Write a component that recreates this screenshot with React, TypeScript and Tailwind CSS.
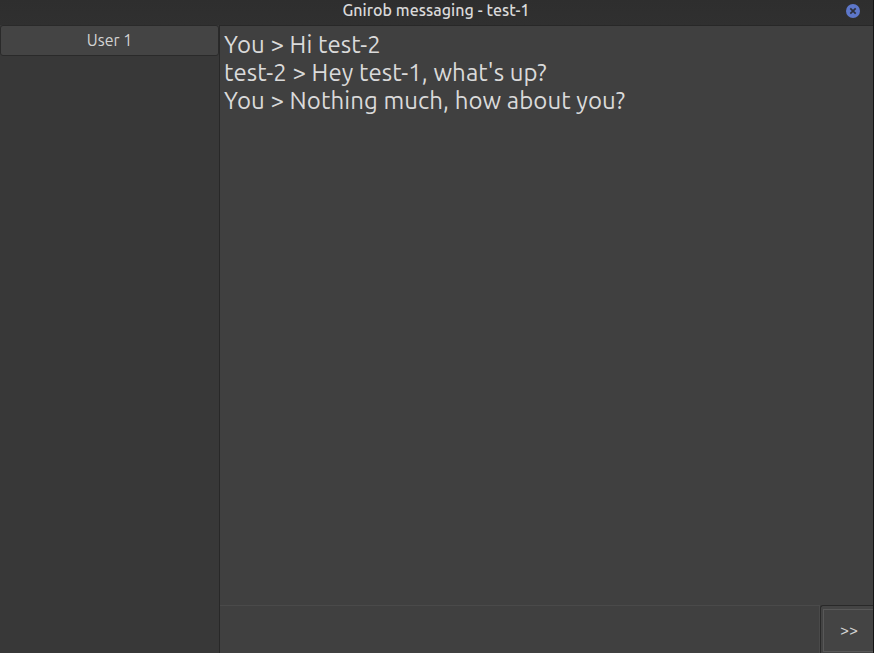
const messages = [
  "You > Hi test-2",
  "test-2 > Hey test-1, what's up?",
  "You > Nothing much, how about you?",
];

function CloseIcon() {
  return (
    <svg width="14" height="14" viewBox="0 0 14 14" className="block">
      <circle cx="7" cy="7" r="7" fill="#5d77ca" />
      <path d="M4.3 4.3 9.7 9.7M9.7 4.3 4.3 9.7" stroke="#2d303b" strokeWidth="1.7" />
    </svg>
  );
}

function TitleBar() {
  return (
    <header className="grid h-[25px] shrink-0 grid-cols-[1fr_auto_1fr] bg-linear-to-b from-[#2e2e2e] to-[#303030]">
      <span />
      <h1 className="pr-px text-[16px] leading-[20px] font-medium tracking-[0.05px] whitespace-nowrap text-[#dadada]">
        Gnirob messaging - test-1
      </h1>
      <button aria-label="Close" className="mt-1 mr-[13px] size-3.5 justify-self-end">
        <CloseIcon />
      </button>
    </header>
  );
}

export default function App() {
  return (
    <div className="flex h-[653px] w-[874px] flex-col overflow-hidden border-r border-[#151515] bg-[#383838] font-['Ubuntu','Noto_Sans',sans-serif]">
      <TitleBar />
      <div className="flex min-h-0 flex-1">
        <aside className="w-[219px] shrink-0 bg-[#383838]">
          <button className="block h-[31px] w-full rounded-[3px] border border-[#2a2a2a] bg-[#444444] text-[16px] leading-[28px] text-[#d3d3d3]">
            <span className="block h-[29px]">User 1</span>
          </button>
        </aside>
        <main className="flex min-w-0 flex-1 flex-col border-t border-l border-[#282828] bg-[#404040]">
          <div className="flex-1 pt-[5px] pl-1 text-[24px] leading-7 tracking-[0.085px] text-[#dadada]">
            {messages.map((text) => (
              <p key={text} className="whitespace-nowrap">
                {text}
              </p>
            ))}
          </div>
          <div className="flex h-12 shrink-0">
            <div className="flex-1 border-t border-r border-[#4a4a4a]" />
            <button className="w-[53px] rounded-tl-[3px] border-t border-l border-[#292929] bg-[#444444] pt-[3px] pb-px pl-0.5">
              <span className="flex h-full w-full items-center justify-center border-y border-l border-[#585858] pb-0.5 pl-px text-[16px] text-[#d3d3d3]">
                &gt;&gt;
              </span>
            </button>
          </div>
        </main>
      </div>
    </div>
  );
}
